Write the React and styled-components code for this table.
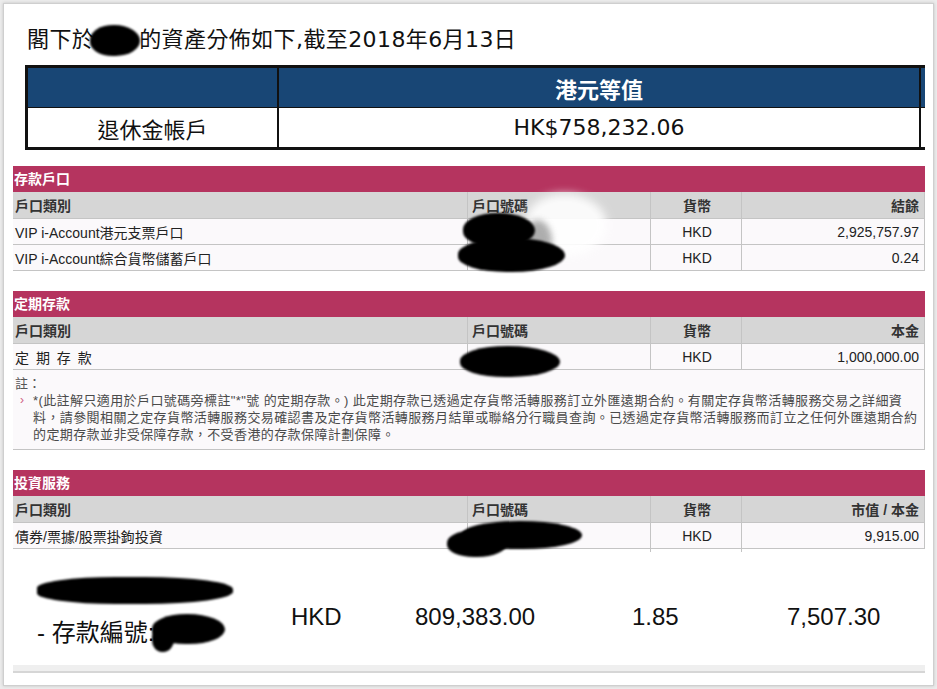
import React from "react";
import styled, { createGlobalStyle } from "styled-components";

const GlobalStyle = createGlobalStyle`
  body {
    margin: 0;
    background: #ececec;
  }
`;

const Card = styled.div`
  position: relative;
  width: 929px;
  height: 681px;
  margin: 3px;
  background: #fff;
  border: 1px solid #cfcfcf;
  box-shadow: 0 0 3px rgba(0, 0, 0, 0.18);
  overflow: hidden;
  font-family: "Liberation Sans", "Noto Sans CJK TC", sans-serif;
  color: #222;
`;

const Title = styled.div`
  margin: 22px 0 0 23px;
  height: 28px;
  line-height: 28px;
  font-family: "DejaVu Sans", "Noto Sans CJK TC", sans-serif;
  font-size: 22px;
  letter-spacing: 0.4px;
  color: #111;
  white-space: nowrap;
`;

const Gap = styled.span`
  display: inline-block;
  width: ${p => p.$w}px;
`;

const Summary = styled.div`
  margin: 11px 0 0 21px;
  width: 897px;
  border: 3px solid #111;
  border-right: none;
  display: grid;
  grid-template-columns: 251px 642px 4px;
  font-family: "DejaVu Sans", "Noto Sans CJK TC", sans-serif;
  font-size: 22px;
`;

const SumCell = styled.div`
  height: 39px;
  display: flex;
  align-items: center;
  justify-content: center;
  background: ${p => (p.$head ? "#184675" : "#fff")};
  color: ${p => (p.$head ? "#fff" : "#111")};
  font-weight: ${p => (p.$head ? 700 : 400)};
  border-right: ${p => (p.$last ? "none" : "2px solid #111")};
  border-bottom: ${p => (p.$head ? "1px solid #111" : "none")};
`;

const Section = styled.section`
  margin: ${p => p.$top}px 0 0 9px;
  width: 912px;
`;

const Bar = styled.div`
  height: 26px;
  line-height: 26px;
  background: #b5345f;
  color: #fff;
  font-weight: 700;
  font-size: 14px;
  padding-left: 1px;
`;

const Row = styled.div`
  display: grid;
  grid-template-columns: 455px 183px 91px 1fr;
  box-sizing: border-box;
  height: ${p => (p.$head ? 27 : p.$cut ? 3 : 26)}px;
  background: ${p => (p.$head ? "#d6d6d6" : p.$cut ? "#fff" : "#fbf9fb")};
  border-bottom: ${p => (p.$cut ? "none" : "1px solid #c4c4c4")};
  border-right: ${p => (p.$cut ? "none" : "1px solid #c4c4c4")};
  font-size: 14px;
  font-weight: ${p => (p.$head ? 700 : 400)};
  color: ${p => (p.$head ? "#333" : "#222")};
`;

const Cell = styled.div`
  display: flex;
  align-items: center;
  justify-content: ${p =>
    p.$align === "right" ? "flex-end" : p.$align === "center" ? "center" : "flex-start"};
  padding: 0 ${p => (p.$align === "right" ? 5 : 2)}px 0 ${p => (p.$align === "left" ? 2 : 4)}px;
  border-right: ${p => (p.$last ? "none" : "1px solid #c4c4c4")};
  white-space: nowrap;
  word-spacing: ${p => (p.$spaced ? "3px" : "0")};
`;

const Notes = styled.div`
  box-sizing: border-box;
  height: 80px;
  padding: 5px 0 6px 2px;
  background: #fbf9fb;
  border-right: 1px solid #c4c4c4;
  border-bottom: 1px solid #c4c4c4;
  font-size: 13px;
  line-height: 17px;
`;

const NoteLabel = styled.div`
  color: #555;
`;

const NoteItem = styled.div`
  display: flex;
`;

const Bullet = styled.span`
  width: 13px;
  padding-left: 5px;
  color: #cf5d84;
  font-size: 12px;
`;

const NoteText = styled.div`
  color: #4a4a4a;
  letter-spacing: 0.4px;
  white-space: nowrap;
`;

const BigRow = styled.div`
  box-sizing: border-box;
  height: 113px;
  margin-left: 33px;
  padding-top: 17px;
  display: grid;
  grid-template-columns: 254px 124px 217px 155px 1fr;
  align-items: center;
  font-size: 24px;
  color: #111;
`;

const BigName = styled.div`
  display: flex;
  flex-direction: column;
`;

const BigSlot = styled.div`
  height: 32px;
`;

const BigLine = styled.div`
  height: 28px;
  line-height: 28px;
  white-space: nowrap;
`;

const BottomBar = styled.div`
  margin-left: 9px;
  width: 912px;
  height: 6px;
  background: #efefef;
  border-bottom: 2px solid #d6d6d6;
`;

const Blob = styled.div`
  position: absolute;
  left: ${p => p.$x - 4}px;
  top: ${p => p.$y - 4}px;
  width: ${p => p.$w}px;
  height: ${p => p.$h}px;
  border-radius: ${p => p.$r || "48% 52% 50% 46%"};
  background: ${p => p.$color || "#000"};
  opacity: ${p => p.$o || 1};
  filter: blur(${p => p.$blur || 1}px);
`;

const blobs = [
  { x: 90, y: 25, w: 50, h: 31 },
  { x: 525, y: 194, w: 82, h: 62, color: "#fff", o: 0.9, blur: 5 },
  { x: 524, y: 220, w: 28, h: 42, color: "#9a9a9a", o: 0.8, blur: 3 },
  { x: 463, y: 213, w: 72, h: 34 },
  { x: 458, y: 238, w: 107, h: 34 },
  { x: 460, y: 346, w: 100, h: 31 },
  { x: 462, y: 521, w: 120, h: 28 },
  { x: 447, y: 530, w: 60, h: 27 },
  { x: 37, y: 577, w: 196, h: 27, r: "40% 45% 45% 40%" },
  { x: 152, y: 614, w: 73, h: 30 },
  { x: 152, y: 626, w: 22, h: 26 }
];

const cols = ["戶口類別", "戶口號碼", "貨幣"];

function HeadRow({ last }) {
  return (
    <Row $head>
      <Cell $align="left">{cols[0]}</Cell>
      <Cell>{cols[1]}</Cell>
      <Cell $align="center">{cols[2]}</Cell>
      <Cell $align="right" $last>{last}</Cell>
    </Row>
  );
}

function DataRow({ name, amount, spaced }) {
  return (
    <Row>
      <Cell $align="left" $spaced={spaced}>{name}</Cell>
      <Cell></Cell>
      <Cell $align="center">HKD</Cell>
      <Cell $align="right" $last>{amount}</Cell>
    </Row>
  );
}

export default function App() {
  return (
    <>
      <GlobalStyle />
      <Card>
        <Title>閣下於<Gap $w={45} />的資產分佈如下,截至2018年6月13日</Title>

        <Summary>
          <SumCell $head></SumCell>
          <SumCell $head>港元等值</SumCell>
          <SumCell $head $last></SumCell>
          <SumCell>退休金帳戶</SumCell>
          <SumCell>HK$758,232.06</SumCell>
          <SumCell $last></SumCell>
        </Summary>

        <Section $top={16}>
          <Bar>存款戶口</Bar>
          <HeadRow last="結餘" />
          <DataRow name="VIP i-Account港元支票戶口" amount="2,925,757.97" />
          <DataRow name="VIP i-Account綜合貨幣儲蓄戶口" amount="0.24" />
        </Section>

        <Section $top={20}>
          <Bar>定期存款</Bar>
          <HeadRow last="本金" />
          <DataRow name="定 期 存 款" amount="1,000,000.00" spaced />
          <Notes>
            <NoteLabel>註：</NoteLabel>
            <NoteItem>
              <Bullet>›</Bullet>
              <div>
                <NoteText>*(此註解只適用於戶口號碼旁標註"*"號 的定期存款。) 此定期存款已透過定存貨幣活轉服務訂立外匯遠期合約。有關定存貨幣活轉服務交易之詳細資</NoteText>
                <NoteText>料，請參閱相關之定存貨幣活轉服務交易確認書及定存貨幣活轉服務月結單或聯絡分行職員查詢。已透過定存貨幣活轉服務而訂立之任何外匯遠期合約</NoteText>
                <NoteText>的定期存款並非受保障存款，不受香港的存款保障計劃保障。</NoteText>
              </div>
            </NoteItem>
          </Notes>
        </Section>

        <Section $top={20}>
          <Bar>投資服務</Bar>
          <HeadRow last="市值 / 本金" />
          <DataRow name="債券/票據/股票掛鉤投資" amount="9,915.00" />
          <Row $cut>
            <Cell></Cell>
            <Cell></Cell>
            <Cell></Cell>
            <Cell $last></Cell>
          </Row>
        </Section>

        <BigRow>
          <BigName>
            <BigSlot />
            <BigLine>- 存款編號:</BigLine>
          </BigName>
          <div>HKD</div>
          <div>809,383.00</div>
          <div>1.85</div>
          <div>7,507.30</div>
        </BigRow>
        <BottomBar />

        {blobs.map((b, i) => (
          <Blob key={i} $x={b.x} $y={b.y} $w={b.w} $h={b.h} $r={b.r} $color={b.color} $o={b.o} $blur={b.blur} />
        ))}
      </Card>
    </>
  );
}
